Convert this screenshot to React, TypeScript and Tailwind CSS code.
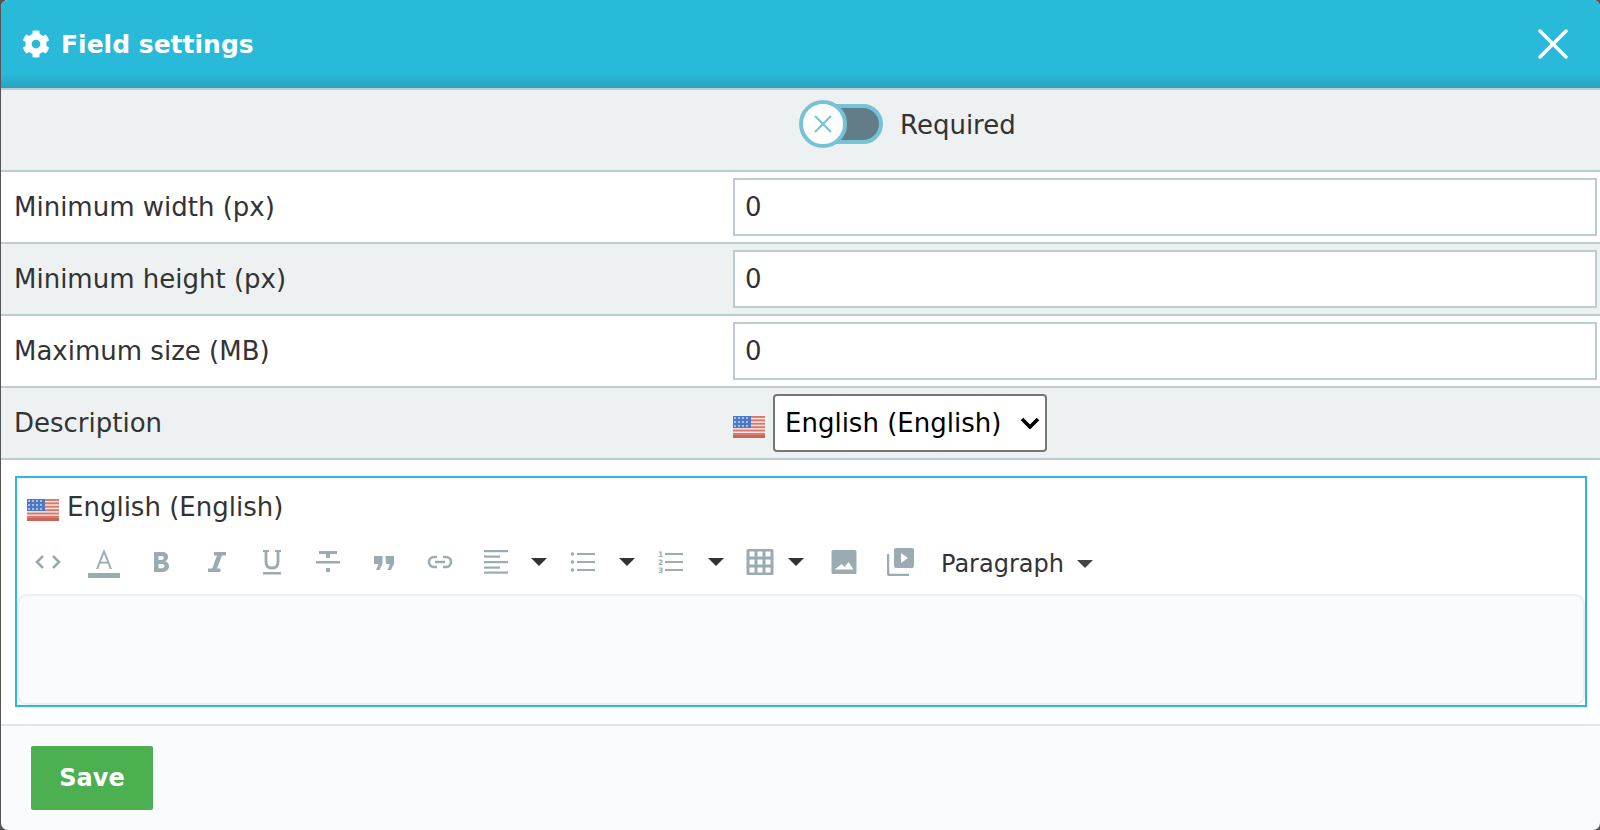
import React from 'react';
import { FaCog } from 'react-icons/fa';

const ICON = '#9aabb1';

const Flag = () => (
  <svg width="32" height="22" viewBox="0 0 32 22" className="mt-[7px] shrink-0 blur-[0.6px]">
    <rect width="32" height="22" fill="#f3e6e4" />
    {[0, 3.4, 6.8, 10.2, 13.6, 17].map((y) => (
      <rect key={y} y={y} width="32" height="1.9" fill="#d9776c" />
    ))}
    <rect y="18.8" width="32" height="3.2" fill="#cf6357" />
    <rect width="18" height="12" fill="#4d78c4" />
    {[2, 6, 10, 14].map((x) =>
      [2, 6, 10].map((y) => <circle key={`${x}-${y}`} cx={x} cy={y} r="0.9" fill="#cfe0f5" />)
    )}
  </svg>
);

const Caret = ({ color = '#333', w = 16 }: { color?: string; w?: number }) => (
  <svg width={w} height="8" viewBox="0 0 16 8"><path d="M0 0h16L8 8z" fill={color} /></svg>
);

const Btn = ({ w = 56, children }: { w?: number; children: React.ReactNode }) => (
  <div className="flex h-[32px] items-center justify-center shrink-0" style={{ width: w }}>{children}</div>
);

const Icon = ({ w = 28, h = 28, children }: { w?: number; h?: number; children: React.ReactNode }) => (
  <svg width={w} height={h} viewBox={`0 0 ${w} ${h}`} fill={ICON}>{children}</svg>
);

const Row = ({ label, alt, children }: { label: string; alt?: boolean; children: React.ReactNode }) => (
  <div className={`flex h-[72px] items-center border-b-2 border-[#bcccd4] ${alt ? 'bg-[#edf1f2]' : 'bg-white'}`}>
    <div className="w-[732px] shrink-0 pl-[13px]">{label}</div>
    <div className="flex min-w-0 flex-1 items-center pr-[3px]">{children}</div>
  </div>
);

const NumberField = () => (
  <input
    readOnly
    value="0"
    className="h-[58px] w-full border-2 border-[#bcccd4] bg-white pl-[10px] text-[#333] outline-none"
  />
);

export default function App() {
  return (
    <div className="h-[830px] w-[1600px] overflow-hidden bg-[#555]">
      <div className="ml-px flex h-[830px] flex-col overflow-hidden rounded-[7px] bg-[#fafbfd] text-[26px] leading-[36px] text-[#333] [font-family:'DejaVu_Sans',sans-serif]">
        {/* header */}
        <div className="flex h-[90px] shrink-0 items-center justify-between border-b-2 border-[#bcccd4] bg-[linear-gradient(to_bottom,#29b9d9_0,#29b9d9_74px,#2aa3bd_88px)] pr-[32px] pl-[21px]">
          <div className="flex items-center gap-[11px] text-white">
            <FaCog size={28} />
            <span className="mt-[2px] text-[25px] font-bold">Field settings</span>
          </div>
          <svg width="30" height="30" viewBox="0 0 30 30" stroke="#fff" strokeWidth="3.400" strokeLinecap="round">
            <path d="M2 2l26 26M28 2L2 28" />
          </svg>
        </div>

        {/* required toggle */}
        <div className="flex h-[82px] shrink-0 items-center border-b-2 border-[#bcccd4] bg-[#edf1f2] pb-[12px] pl-[798px]">
          <div className="relative h-[40px] w-[84px]">
            <div className="ml-[4px] h-[40px] w-[80px] rounded-full border-4 border-[#76c3d8] bg-[#627d88]" />
            <div className="absolute top-[-4px] left-0 flex h-[48px] w-[48px] items-center justify-center rounded-full border-4 border-[#76c3d8] bg-white">
              <svg width="20" height="20" viewBox="0 0 20 20" stroke="#76c3d8" strokeWidth="2"><path d="M2 2l16 16M18 2L2 18" /></svg>
            </div>
          </div>
          <span className="mt-[2px] ml-[17px]">Required</span>
        </div>

        <Row label="Minimum width (px)"><NumberField /></Row>
        <Row label="Minimum height (px)" alt><NumberField /></Row>
        <Row label="Maximum size (MB)"><NumberField /></Row>
        <Row label="Description" alt>
          <Flag />
          <div className="relative ml-[8px]">
            <select className="block h-[58px] w-[274px] appearance-none rounded-[4px] border-2 border-[#767676] bg-white pb-px pl-[10px] text-black">
              <option>English (English)</option>
            </select>
            <svg className="absolute top-[23px] right-[7px]" width="20" height="12" viewBox="0 0 20 12" fill="none" stroke="#000" strokeWidth="3.600">
              <path d="M2 2l8 8 8-8" />
            </svg>
          </div>
        </Row>

        {/* editor */}
        <div className="h-[266px] shrink-0 border-b-2 border-[#dde6e9] bg-white pt-[16px] pr-[13px] pl-[14px]">
          <div className="flex h-[231px] flex-col border-2 border-[#29b9d9]">
            <div className="flex h-[56px] shrink-0 items-center gap-[8px] pl-[10px]">
              <Flag />
              <span className="mt-[2px]">English (English)</span>
            </div>
            <div className="flex h-[60px] shrink-0 items-start pt-[12px] pl-[3px]">
              <Btn>
                <Icon><path d="M9 8l-6 6 6 6M19 8l6 6-6 6" fill="none" stroke={ICON} strokeWidth="2.600" /></Icon>
              </Btn>
              <Btn>
                <svg width="32" height="32" viewBox="0 0 32 32" fill={ICON}>
                  <path d="M16 3l8 20h-2.200l-2-5.400h-7.600l-2 5.400H8zm0 5l-3.100 7.800h6.200z" />
                  <rect y="27" width="32" height="5" />
                </svg>
              </Btn>
              <Btn>
                <Icon><path fillRule="evenodd" d="M8 4h8c4 0 6 2 6 5 0 2-1 3.500-3 4.200 2.500.6 4 2.300 4 4.800 0 3.500-2.500 6-7 6H8zm4.500 4v4h3c1.500 0 2.300-.8 2.300-2s-.8-2-2.300-2zm0 8v4.200h3.500c1.600 0 2.500-.8 2.500-2.100s-.9-2.100-2.500-2.100z" /></Icon>
              </Btn>
              <Btn>
                <Icon><path d="M12 4h12v3.500h-4L15 20.500h3.500V24H6v-3.500h4.200L15 7.500h-3z" /></Icon>
              </Btn>
              <Btn>
                <Icon>
                  <path d="M8 3v11c0 4 2.500 6 6 6s6-2 6-6V3" fill="none" stroke={ICON} strokeWidth="2.800" />
                  <rect x="5" y="2" width="6" height="2" />
                  <rect x="17" y="2" width="6" height="2" />
                  <rect x="5" y="24" width="18" height="2.500" />
                </Icon>
              </Btn>
              <Btn>
                <Icon>
                  <rect x="5" y="3" width="18" height="3" />
                  <rect x="12" y="6" width="4" height="4" />
                  <rect x="2" y="13" width="24" height="2.500" />
                  <rect x="12" y="20" width="4" height="4" />
                </Icon>
              </Btn>
              <Btn>
                <Icon><path d="M4 8h8.500v7.500L9.500 22H6l2.500-6H4zM15.500 8H24v7.500L21 22h-3.500l2.500-6h-4z" /></Icon>
              </Btn>
              <Btn>
                <Icon>
                  <path d="M11 9H8a5 5 0 000 10h3M17 9h3a5 5 0 010 10h-3M9 14h10" fill="none" stroke={ICON} strokeWidth="2.600" />
                </Icon>
              </Btn>
              <Btn>
                <Icon>
                  {[2, 7.500, 13, 18.500, 23.500].map((y, i) => (
                    <rect key={y} x="2" y={y} width={i % 2 ? 16 : 24} height="2.200" />
                  ))}
                </Icon>
              </Btn>
              <Btn w={30}><Caret /></Btn>
              <Btn w={58}>
                <Icon>
                  {[6, 14, 22].map((y) => (
                    <g key={y}>
                      <circle cx="3.500" cy={y} r="1.800" />
                      <rect x="8" y={y - 1} width="18" height="2" />
                    </g>
                  ))}
                </Icon>
              </Btn>
              <Btn w={30}><Caret /></Btn>
              <Btn w={58}>
                <Icon>
                  {[6, 14, 22].map((y, i) => (
                    <g key={y}>
                      <rect x="8" y={y - 1} width="18" height="2" />
                      <text x="1" y={y + 3} fontSize="7.500" fontWeight="700" fill={ICON}>{i + 1}</text>
                    </g>
                  ))}
                </Icon>
              </Btn>
              <Btn w={32}><Caret /></Btn>
              <Btn>
                <Icon>
                  <path fillRule="evenodd" d="M2 1h24a1.500 1.500 0 011.500 1.500v23A1.500 1.500 0 0126 27H2a1.500 1.500 0 01-1.500-1.500v-23A1.500 1.500 0 012 1zm1.500 2.500v5h5v-5zm8 0v5h5v-5zm8 0v5h5v-5zm-16 8v5h5v-5zm8 0v5h5v-5zm8 0v5h5v-5zm-16 8v5h5v-5zm8 0v5h5v-5zm8 0v5h5v-5z" />
                </Icon>
              </Btn>
              <Btn w={16}><Caret /></Btn>
              <div className="w-[12px] shrink-0" />
              <Btn>
                <Icon>
                  <path fillRule="evenodd" d="M3 2h22a1.500 1.500 0 011.500 1.500v21A1.500 1.500 0 0125 26H3a1.500 1.500 0 01-1.500-1.500v-21A1.500 1.500 0 013 2zm1.500 19.500h19l-5-7.500-4 5-2.800-3z" />
                </Icon>
              </Btn>
              <Btn w={58}>
                <Icon>
                  <path fillRule="evenodd" d="M9 0h16a2 2 0 012 2v16a2 2 0 01-2 2H9a2 2 0 01-2-2V2a2 2 0 012-2zm5 5v10l7-5z" />
                  <path d="M1 6v19a2 2 0 002 2h19" fill="none" stroke={ICON} strokeWidth="2.500" />
                </Icon>
              </Btn>
              <div className="mt-[2px] ml-[11px] flex h-[32px] items-center gap-[13px] text-[24px]">
                <span>Paragraph</span>
                <Caret color="#444" />
              </div>
            </div>
            <div className="min-h-0 flex-1 rounded-[10px] border-2 border-[#eeeeee] bg-[#fafbfd]" />
          </div>
        </div>

        {/* footer */}
        <div className="pt-[20px] pl-[30px]">
          <button className="h-[64px] w-[122px] rounded-[2px] bg-[#4caf50] text-[24px] font-bold text-white">
            Save
          </button>
        </div>
      </div>
    </div>
  );
}
